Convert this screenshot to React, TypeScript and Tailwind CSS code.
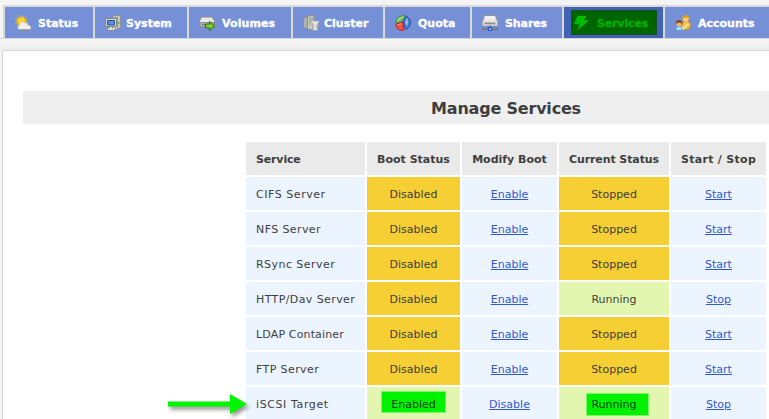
import type { ReactNode } from "react";

function Svg({ children }: { children: ReactNode }) {
  return (
    <svg viewBox="0 0 16 16" className="h-4 w-4 shrink-0" aria-hidden="true">
      {children}
    </svg>
  );
}

const StatusIcon = (
  <Svg>
    <path d="M6.5 0v12M.3 6.2h12.4M2 1.7l9 9M11 1.7l-9 9M4 .4l5 11.2M9 .4 4 11.6M.4 3.6l11.8 4.8M.4 8.6l11.8-4.8" stroke="#edbd0a" strokeWidth="1" />
    <circle cx="6.5" cy="6.2" r="4.2" fill="#fcd52e" stroke="#e9ad12" />
    <path d="M5 14.5C2.4 14.5 2 10.8 4.6 10 4.6 7 8 6 9.7 8c2.1-.9 3.6.7 3.2 2.3 3.4-.2 3.8 3.8 1.6 4.2Z" fill="#efefe6" stroke="#c9c9c0" strokeWidth=".8" />
    <path d="M4.5 15h10.8" stroke="#85858a" />
  </Svg>
);
const SystemIcon = (
  <Svg>
    <path d="M7.5 1.5 10 .5h5.5v12L13 14H7.5Z" fill="#c4c7c3" stroke="#888e8b" strokeWidth=".9" />
    <path d="M12.5 2v11M9 2.5h3" stroke="#8b918d" strokeWidth=".8" />
    <path d="M12.5 8h2" stroke="#37b43b" strokeWidth="1.5" />
    <path d="M.5 3.5h11v8H.5Z" fill="#dadcd6" stroke="#80867f" />
    <path d="M2.5 5.5h7v4.5h-7Z" fill="#5a8bdc" stroke="#244e9b" />
    <path d="M6 12v2M3 14.3h6.5" stroke="#dfdfd3" strokeWidth="2" />
    <path d="M3 15.5h6.5" stroke="#888a82" />
  </Svg>
);
const VolumesIcon = (
  <Svg>
    <path d="M2.5 2h10.5L15.5 6v6H.5V6Z" fill="#dcdddb" stroke="#8f918d" />
    <path d="M3 4h10M1.5 6h13" stroke="#fafafa" />
    <path d="M1 7.5h14v4H1Z" fill="#b5b7b4" stroke="#858883" strokeWidth=".8" />
    <path d="M3 9.5h5" stroke="#70736e" strokeWidth="1.3" />
    <path d="M6.5 9h4V6.3l5.2 5-5.2 4.5V13h-4Z" fill="#6cbc25" stroke="#2e770e" />
    <path d="M8 11h5.5" stroke="#b7df60" />
  </Svg>
);
const ClusterIcon = (
  <Svg>
    <path d="M.5 3.5 4.5 1v13.5L.5 12Z" fill="#aeb2ae" stroke="#888d88" />
    <path d="M4.5 1.5 7 .5h4v14H4.5Z" fill="#c6cac3" stroke="#8a9088" />
    <path d="M6 3h4M6 5h4M6 7h4" stroke="#858b82" strokeWidth=".8" />
    <path d="M6 9h1.5" stroke="#5cae45" />
    <path d="M9.5 7.5h5.5l-.5 8h-4.5Z" fill="#ededed" stroke="#999c99" />
    <path d="M8.8 6.5h6.7v1H8.8Z" fill="#fff" stroke="#d7d9d7" />
    <path d="M11.2 9v5M13.3 9v5" stroke="#b2b5b2" strokeWidth=".7" />
  </Svg>
);
const QuotaIcon = (
  <Svg>
    <path d="M.8 8C.5 4 4 .5 10 .7 9 3 9 6.7.8 8Z" fill="#72c75e" stroke="#38893a" />
    <path d="M2.5 5.8C4 3.5 6 2.2 8.5 1.8" stroke="#c6edba" fill="none" />
    <path d="M8.7 6 11.2 1.3c5.2 2.2 5.6 8.8.4 13.2-2.2-2.4-3.2-5-2.9-8.5Z" fill="#4b82d1" stroke="#1b4b98" />
    <path d="M10 8l1.5-5c2.2 1.5 2 4.6.6 8Z" fill="#8ab7ec" />
    <path d="M.8 9.3 8 7.3l1 7.9c-4.6.8-8-1.6-8.2-5.9Z" fill="#ef4f44" stroke="#c81e1b" />
    <path d="M2 10l4.5-1.4" stroke="#ff9b8f" />
  </Svg>
);
const SharesIcon = (
  <Svg>
    <path d="M2.5.5h11l2 5.5v4.5H.5V6Z" fill="#dfe0df" stroke="#929593" />
    <path d="M3.5 2h9M3 4h10" stroke="#fff" />
    <path d="M1.2 6.5h13.6v3.7H1.2Z" fill="#b6b8b7" stroke="#f1f1f1" strokeWidth=".8" />
    <path d="M3 8.5h9" stroke="#8c908d" />
    <path d="M8 10.5v2" stroke="#747b83" strokeWidth="2" />
    <path d="M0 13.8h16" stroke="#686f78" strokeWidth="2.4" />
    <path d="M1 13.5h4M11 13.5h4" stroke="#969da4" strokeWidth=".8" />
    <path d="M6.5 12.5h3v3h-3Z" fill="#8bbcff" stroke="#1551d7" />
  </Svg>
);
const ServicesIcon = (
  <Svg>
    <path d="M3.5.8H13L9.6 5.3H15L3 15.8 6 9.3H0Z" fill="#00b900" />
    <path d="M4.5 2h6L7.5 6.3h5" stroke="#00cc00" strokeWidth=".7" fill="none" />
  </Svg>
);
const AccountsIcon = (
  <Svg>
    <path d="M7 15V9l2.5-3h3L16 9l-2 5Z" fill="#f4c034" stroke="#c2851a" strokeWidth=".7" />
    <circle cx="10.8" cy="3.8" r="3" fill="#f8cb85" />
    <path d="M7.3 5.5C6.8 1.5 8.5.2 11 .2s4.2 1.5 3.4 5.3L13 2.7H9Z" fill="#dfa010" />
    <path d="M6 11.5 8 14l5.5-5.5" stroke="#ffe0a0" strokeWidth="2" fill="none" />
    <path d="M.7 15.5c0-3 1.1-4.2 3.3-4.2s3.3 1.2 3.3 4.2Z" fill="#abdcff" stroke="#438bc8" strokeWidth=".8" />
    <circle cx="4" cy="8.7" r="2.7" fill="#f2b579" />
    <path d="M.8 9.5C.6 6.3 2 5 4 5s3.4 1.3 3.2 4.5L5.5 7.7H2.5Z" fill="#8d4817" />
  </Svg>
);

const tabs = [
  { label: "Status", icon: StatusIcon, box: "w-[88px] gap-[7px]" },
  { label: "System", icon: SystemIcon, box: "w-[92px] gap-[5px]" },
  { label: "Volumes", icon: VolumesIcon, box: "w-[102px] gap-[7px] tracking-[0.1px]" },
  { label: "Cluster", icon: ClusterIcon, box: "w-[90px] gap-[5px]" },
  { label: "Quota", icon: QuotaIcon, box: "w-[85px] gap-[7px]" },
  { label: "Shares", icon: SharesIcon, box: "w-[90px] gap-[7px] tracking-[-0.1px]" },
  { label: "Services", icon: ServicesIcon, box: "w-[99px] gap-[7px] tracking-[-0.15px]", active: true },
  { label: "Accounts", icon: AccountsIcon, box: "w-[110px] gap-[7px]" },
];

const rows = [
  { name: "CIFS Server", spacing: "tracking-[0.55px]", enabled: false, running: false },
  { name: "NFS Server", spacing: "tracking-[0.4px]", enabled: false, running: false },
  { name: "RSync Server", spacing: "tracking-[0.45px]", enabled: false, running: false },
  { name: "HTTP/Dav Server", spacing: "tracking-[0.4px]", enabled: false, running: true },
  { name: "LDAP Container", spacing: "tracking-[0.15px]", enabled: false, running: false },
  { name: "FTP Server", spacing: "tracking-[0.4px]", enabled: false, running: false },
  { name: "iSCSI Target", spacing: "tracking-[0.6px]", enabled: true, running: true, marked: true },
];

const columns = "grid grid-cols-[119px_93px_95px_110px_95px] gap-[2px]";
const cell = "flex h-[33px] items-center justify-center pt-[3px]";
const tone = (good: boolean) => (good ? "bg-[#e2f6b0]" : "bg-[#f6cf35]");

function Action({ children }: { children: string }) {
  return (
    <div className={`${cell} bg-[#ecf5ff]`}>
      <a className="text-[#3159cf] underline underline-offset-1">{children}</a>
    </div>
  );
}

export default function App() {
  return (
    <div className="h-[419px] w-[769px] overflow-hidden bg-[#f4f4f4] font-['DejaVu_Sans',Verdana,sans-serif] text-[11px] text-[#3e3e3e]">
      <nav className="flex h-[39px] items-end border-b border-[#d8d8d8]">
        <div className="ml-[3px] flex h-[33px] shrink-0 gap-[2px] border-t-2 border-l-2 border-[#dadada] bg-[#dadada]">
          {tabs.map((t) => (
            <div
              key={t.label}
              className={`relative flex h-[31px] shrink-0 items-center pt-px pl-[10px] ${t.box} ${t.active ? "bg-[#4262b2]" : "bg-[#7690d8]"}`}
            >
              {t.active && <div className="absolute top-[3px] left-[7px] h-[25px] w-[86px] border border-[#145028] bg-[#006400]" />}
              <span className="relative flex">{t.icon}</span>
              <span className={`relative pt-[2px] text-[11px] font-bold [-webkit-text-stroke:0.3px] ${t.active ? "text-[#00b000]" : "text-white"}`}>{t.label}</span>
            </div>
          ))}
        </div>
      </nav>
      <div className="h-[11px] bg-linear-to-b from-[#f5f5f5] to-[#ededed]" />
      <main className="ml-[2px] h-[369px] w-[1008px] border-t border-l border-[#d6d6d6] bg-white pt-10 pl-5">
        <div className="w-[966px]">
          <h1 className="flex h-[33px] items-center justify-center bg-[#efefef] pt-[3px] text-[16px] font-bold tracking-[-0.2px]">Manage Services</h1>
          <div className="mt-[18px] flex flex-col items-center gap-[2px]">
            <div className={`${columns} font-bold`}>
              <div className="flex h-[33px] items-center bg-[#eaeaea] pt-[3px] pl-[10px] tracking-[-0.15px]">Service</div>
              <div className={`${cell} bg-[#eaeaea]`}>Boot Status</div>
              <div className={`${cell} bg-[#eaeaea]`}>Modify Boot</div>
              <div className={`${cell} bg-[#eaeaea] tracking-[-0.1px]`}>Current Status</div>
              <div className={`${cell} bg-[#eaeaea] tracking-[0.3px]`}>Start / Stop</div>
            </div>
            {rows.map((r) => (
              <div key={r.name} className={columns}>
                <div className="relative flex h-[33px] items-center bg-[#ecf5ff] pt-[3px] pl-[10px]">
                  {r.marked && (
                    <svg className="absolute top-[4px] left-[-80px] h-[30px] w-[84px] drop-shadow-[2px_3px_2px_#00000070]" viewBox="0 0 84 30">
                      <path d="M2 10.5h62V3l17 10-17 10v-7.5H2Z" fill="#00f500" />
                    </svg>
                  )}
                  <span className={`relative ${r.spacing}`}>{r.name}</span>
                </div>
                <div className={`relative ${cell} ${tone(r.enabled)}`}>
                  {r.marked && <div className="absolute top-[4px] left-[14px] h-[22px] w-[65px] border border-[#7cf765] bg-[#00f200]" />}
                  <span className={r.marked ? "relative text-[#084308]" : ""}>{r.enabled ? "Enabled" : "Disabled"}</span>
                </div>
                <Action>{r.enabled ? "Disable" : "Enable"}</Action>
                <div className={`relative ${cell} ${tone(r.running)}`}>
                  {r.marked && <div className="absolute top-[6px] left-[27px] h-[23px] w-[63px] border border-[#7cf765] bg-[#00f200]" />}
                  <span className={r.marked ? "relative text-[#084308]" : ""}>{r.running ? "Running" : "Stopped"}</span>
                </div>
                <Action>{r.running ? "Stop" : "Start"}</Action>
              </div>
            ))}
          </div>
        </div>
      </main>
    </div>
  );
}
